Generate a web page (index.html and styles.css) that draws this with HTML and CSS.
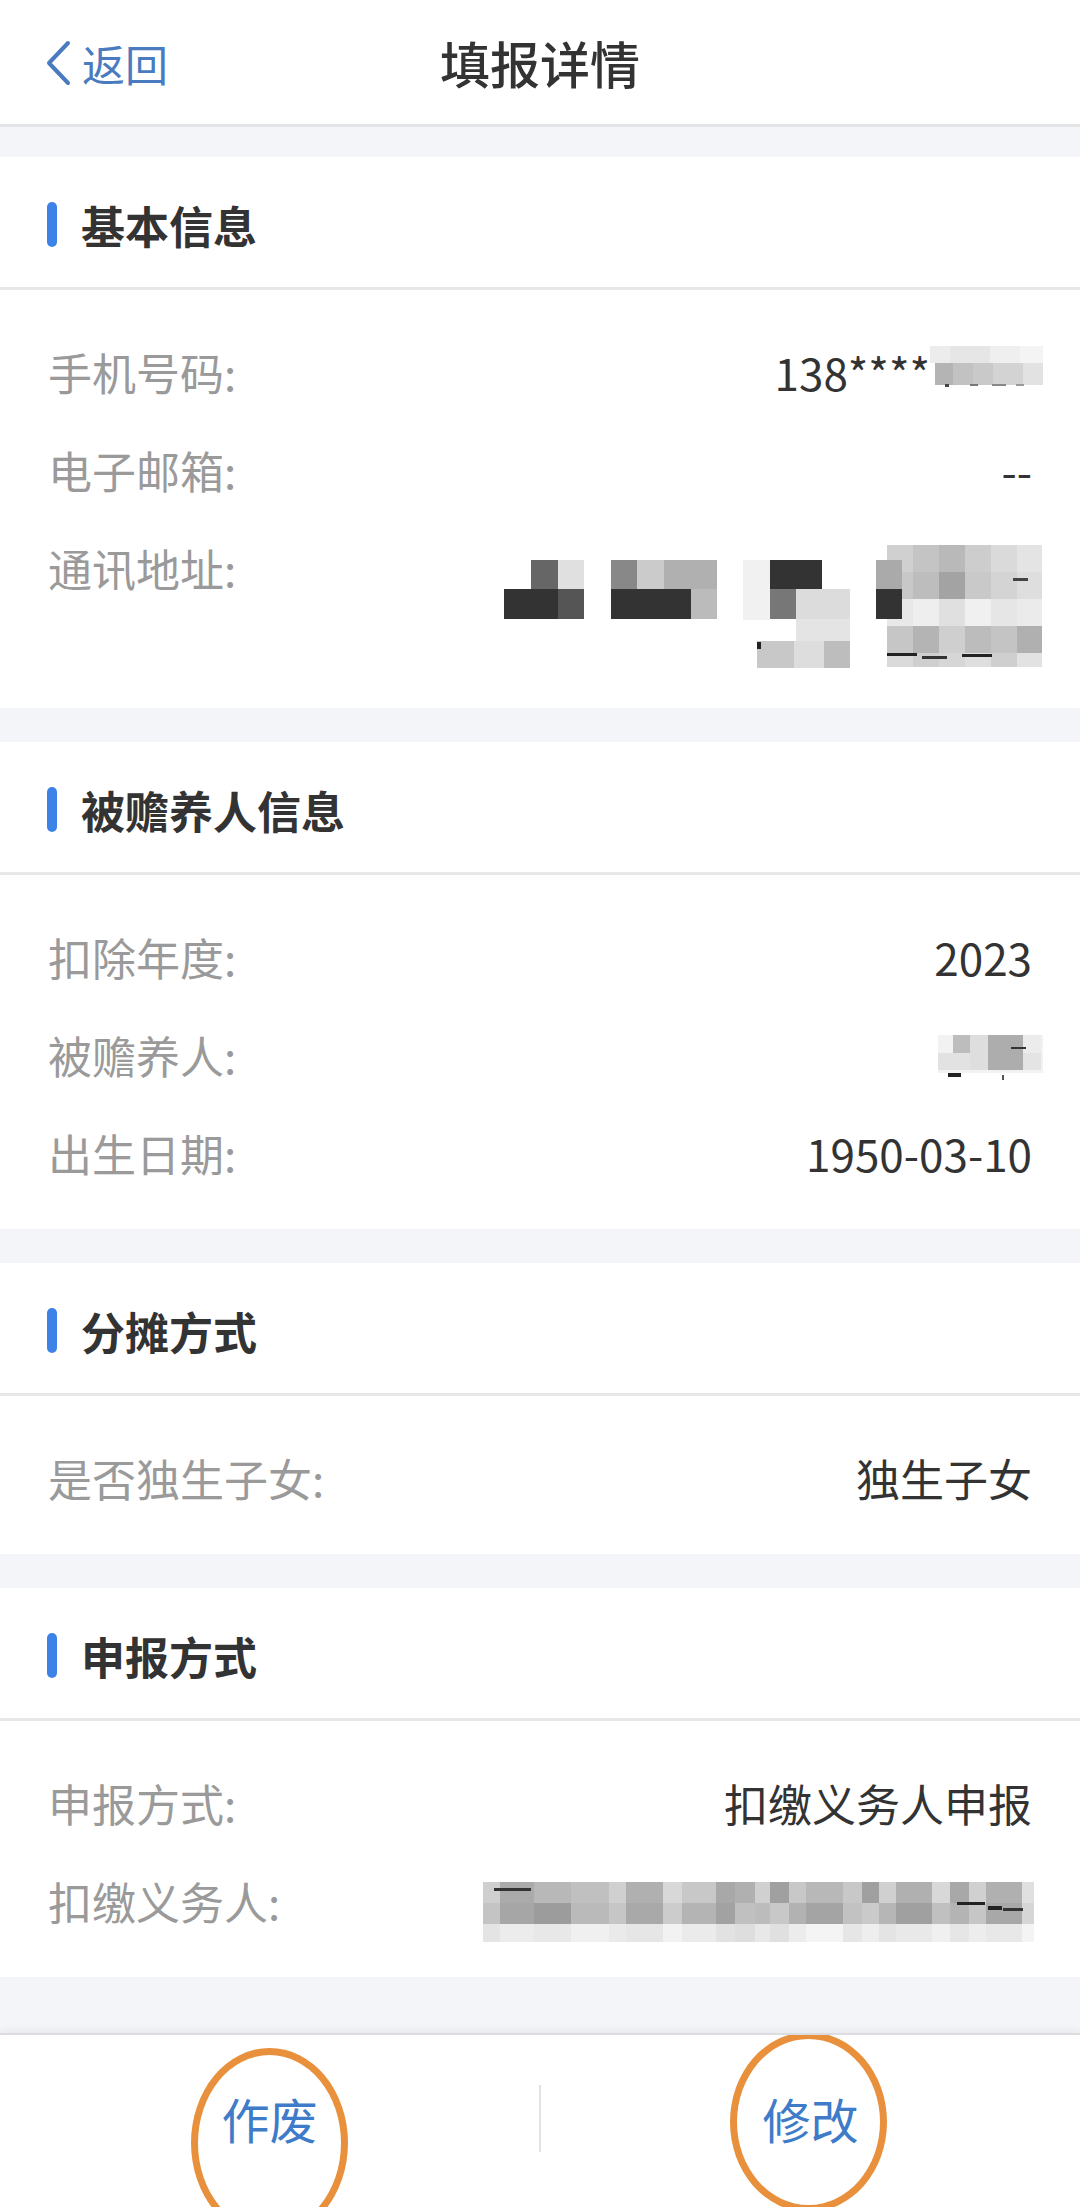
FILE: index.html
```html
<!DOCTYPE html>
<html lang="zh-CN">
<head>
<meta charset="utf-8">
<title>填报详情</title>
<link rel="stylesheet" href="styles.css">
</head>
<body>
<div class="page">
  <header class="nav">
    <a class="back" href="#">
      <svg class="back-icon" width="26" height="46" viewBox="0 0 26 46"><polyline points="23,3 4,23 23,43" fill="none" stroke="#4a7bbf" stroke-width="4" stroke-linecap="round" stroke-linejoin="round"/></svg>
      <span>返回</span>
    </a>
    <h1 class="nav-title">填报详情</h1>
    <span></span>
  </header>

  <main class="content">
    <section class="card">
      <div class="card-head"><span class="bar"></span><h2>基本信息</h2></div>
      <div class="card-body">
        <div class="row">
          <span class="label">手机号码:</span>
          <span class="value">138****<svg class="mosaic mosaic-phone" width="113" height="42" viewBox="0 0 113 42">
            <rect x="0" y="0" width="20" height="17" fill="#ececec"/>
            <rect x="20" y="0" width="40" height="17" fill="#e6e6e6"/>
            <rect x="60" y="0" width="30" height="17" fill="#efefef"/>
            <rect x="90" y="0" width="23" height="17" fill="#f4f4f4"/>
            <rect x="5" y="17" width="18" height="22" fill="#b4b4b4"/>
            <rect x="23" y="17" width="20" height="22" fill="#c2c2c2"/>
            <rect x="43" y="17" width="20" height="22" fill="#c9c9c9"/>
            <rect x="63" y="17" width="30" height="22" fill="#d3d3d3"/>
            <rect x="93" y="17" width="20" height="22" fill="#e2e2e2"/>
            <rect x="15" y="38" width="4" height="3" fill="#444"/>
            <rect x="40" y="38" width="8" height="2" fill="#777"/>
            <rect x="62" y="38" width="14" height="2" fill="#888"/>
            <rect x="86" y="38" width="8" height="2" fill="#999"/>
          </svg></span>
        </div>
        <div class="row">
          <span class="label">电子邮箱:</span>
          <span class="value">--</span>
        </div>
        <div class="row">
          <span class="label">通讯地址:</span>
          <span class="value"><svg class="mosaic mosaic-address" width="560" height="130" viewBox="0 0 560 130">
            <rect x="405" y="5" width="26" height="27" fill="#d0d0d0"/>
            <rect x="431" y="5" width="26" height="27" fill="#c4c4c4"/>
            <rect x="457" y="5" width="26" height="27" fill="#b9b9b9"/>
            <rect x="483" y="5" width="26" height="27" fill="#cdcdcd"/>
            <rect x="509" y="5" width="26" height="27" fill="#dadada"/>
            <rect x="535" y="5" width="25" height="27" fill="#e4e4e4"/>
            <rect x="405" y="32" width="26" height="27" fill="#c8c8c8"/>
            <rect x="431" y="32" width="26" height="27" fill="#bdbdbd"/>
            <rect x="457" y="32" width="26" height="27" fill="#a3a3a3"/>
            <rect x="483" y="32" width="26" height="27" fill="#c9c9c9"/>
            <rect x="509" y="32" width="26" height="27" fill="#d4d4d4"/>
            <rect x="535" y="32" width="25" height="27" fill="#dedede"/>
            <rect x="405" y="59" width="26" height="27" fill="#e8e8e8"/>
            <rect x="431" y="59" width="26" height="27" fill="#eeeeee"/>
            <rect x="457" y="59" width="26" height="27" fill="#e0e0e0"/>
            <rect x="483" y="59" width="26" height="27" fill="#f0f0f0"/>
            <rect x="509" y="59" width="26" height="27" fill="#e6e6e6"/>
            <rect x="535" y="59" width="25" height="27" fill="#ebebeb"/>
            <rect x="405" y="86" width="26" height="27" fill="#c6c6c6"/>
            <rect x="431" y="86" width="26" height="27" fill="#b4b4b4"/>
            <rect x="457" y="86" width="26" height="27" fill="#cfcfcf"/>
            <rect x="483" y="86" width="26" height="27" fill="#bcbcbc"/>
            <rect x="509" y="86" width="26" height="27" fill="#c4c4c4"/>
            <rect x="535" y="86" width="25" height="27" fill="#b0b0b0"/>
            <rect x="405" y="113" width="26" height="14" fill="#dadada"/>
            <rect x="431" y="113" width="26" height="14" fill="#cfcfcf"/>
            <rect x="457" y="113" width="26" height="14" fill="#d6d6d6"/>
            <rect x="483" y="113" width="26" height="14" fill="#dedede"/>
            <rect x="509" y="113" width="26" height="14" fill="#cfcfcf"/>
            <rect x="535" y="113" width="25" height="14" fill="#e2e2e2"/>
            <rect x="261" y="20" width="27" height="60" fill="#f1f1f1"/>
            <rect x="314" y="79" width="54" height="22" fill="#e4e4e4"/>
            <rect x="275" y="101" width="37" height="27" fill="#c8c8c8"/>
            <rect x="312" y="101" width="30" height="27" fill="#dddddd"/>
            <rect x="342" y="101" width="26" height="27" fill="#bdbdbd"/>
            <rect x="49" y="20" width="27" height="29" fill="#666666"/>
            <rect x="76" y="20" width="26" height="29" fill="#e0e0e0"/>
            <rect x="129" y="20" width="26" height="29" fill="#888888"/>
            <rect x="155" y="20" width="27" height="29" fill="#cbcbcb"/>
            <rect x="182" y="20" width="53" height="29" fill="#b0b0b0"/>
            <rect x="288" y="20" width="52" height="29" fill="#333333"/>
            <rect x="394" y="20" width="26" height="29" fill="#aaaaaa"/>
            <rect x="22" y="49" width="54" height="30" fill="#333333"/>
            <rect x="76" y="49" width="26" height="30" fill="#555555"/>
            <rect x="129" y="49" width="80" height="30" fill="#333333"/>
            <rect x="209" y="49" width="26" height="30" fill="#bbbbbb"/>
            <rect x="288" y="49" width="26" height="30" fill="#777777"/>
            <rect x="314" y="49" width="54" height="30" fill="#dcdcdc"/>
            <rect x="394" y="49" width="26" height="30" fill="#333333"/>
            <rect x="275" y="102" width="4" height="7" fill="#222"/>
            <rect x="405" y="113" width="30" height="3" fill="#222"/>
            <rect x="440" y="116" width="25" height="3" fill="#333"/>
            <rect x="480" y="114" width="30" height="3" fill="#222"/>
            <rect x="531" y="38" width="15" height="3" fill="#444"/>
          </svg></span>
        </div>
      </div>
    </section>

    <section class="card">
      <div class="card-head"><span class="bar"></span><h2>被赡养人信息</h2></div>
      <div class="card-body">
        <div class="row">
          <span class="label">扣除年度:</span>
          <span class="value">2023</span>
        </div>
        <div class="row">
          <span class="label">被赡养人:</span>
          <span class="value"><svg class="mosaic mosaic-name" width="105" height="48" viewBox="0 0 105 48">
            <rect x="0" y="2" width="105" height="38" fill="#f2f2f2"/>
            <rect x="0" y="20" width="50" height="17" fill="#e2e2e2"/>
            <rect x="15" y="2" width="17" height="18" fill="#bdbdbd"/>
            <rect x="32" y="2" width="18" height="35" fill="#dedede"/>
            <rect x="50" y="2" width="35" height="35" fill="#adadad"/>
            <rect x="85" y="2" width="18" height="18" fill="#ececec"/>
            <rect x="85" y="20" width="18" height="17" fill="#e4e4e4"/>
            <rect x="10" y="40" width="13" height="4" fill="#222"/>
            <rect x="73" y="14" width="15" height="2" fill="#333"/>
            <rect x="64" y="42" width="2" height="5" fill="#555"/>
          </svg></span>
        </div>
        <div class="row">
          <span class="label">出生日期:</span>
          <span class="value">1950-03-10</span>
        </div>
      </div>
    </section>

    <section class="card">
      <div class="card-head"><span class="bar"></span><h2>分摊方式</h2></div>
      <div class="card-body">
        <div class="row">
          <span class="label">是否独生子女:</span>
          <span class="value">独生子女</span>
        </div>
      </div>
    </section>

    <section class="card">
      <div class="card-head"><span class="bar"></span><h2>申报方式</h2></div>
      <div class="card-body">
        <div class="row">
          <span class="label">申报方式:</span>
          <span class="value">扣缴义务人申报</span>
        </div>
        <div class="row">
          <span class="label">扣缴义务人:</span>
          <span class="value"><svg class="mosaic mosaic-payer" width="555" height="62" viewBox="0 0 555 62">
            <g>
              <rect x="0" y="0" width="17" height="21" fill="#cfcfcf"/>
              <rect x="17" y="0" width="34" height="21" fill="#aaaaaa"/>
              <rect x="51" y="0" width="37" height="21" fill="#b8b8b8"/>
              <rect x="88" y="0" width="38" height="21" fill="#c0c0c0"/>
              <rect x="126" y="0" width="17" height="21" fill="#d0d0d0"/>
              <rect x="143" y="0" width="37" height="21" fill="#b0b0b0"/>
              <rect x="180" y="0" width="19" height="21" fill="#d8d8d8"/>
              <rect x="199" y="0" width="34" height="21" fill="#c8c8c8"/>
              <rect x="233" y="0" width="19" height="21" fill="#a8a8a8"/>
              <rect x="252" y="0" width="20" height="21" fill="#b0b0b0"/>
              <rect x="272" y="0" width="15" height="21" fill="#d0d0d0"/>
              <rect x="287" y="0" width="19" height="21" fill="#a0a0a0"/>
              <rect x="306" y="0" width="17" height="21" fill="#c8c8c8"/>
              <rect x="323" y="0" width="37" height="21" fill="#b8b8b8"/>
              <rect x="360" y="0" width="19" height="21" fill="#c8c8c8"/>
              <rect x="379" y="0" width="17" height="21" fill="#a0a0a0"/>
              <rect x="396" y="0" width="17" height="21" fill="#d0d0d0"/>
              <rect x="413" y="0" width="36" height="21" fill="#b0b0b0"/>
              <rect x="449" y="0" width="18" height="21" fill="#d8d8d8"/>
              <rect x="467" y="0" width="19" height="21" fill="#a8a8a8"/>
              <rect x="486" y="0" width="17" height="21" fill="#d0d0d0"/>
              <rect x="503" y="0" width="36" height="21" fill="#b0b0b0"/>
              <rect x="539" y="0" width="12" height="21" fill="#e0e0e0"/>
            </g>
            <g>
              <rect x="0" y="21" width="17" height="21" fill="#c4c4c4"/>
              <rect x="17" y="21" width="34" height="21" fill="#a6a6a6"/>
              <rect x="51" y="21" width="37" height="21" fill="#9c9c9c"/>
              <rect x="88" y="21" width="38" height="21" fill="#bababa"/>
              <rect x="126" y="21" width="17" height="21" fill="#c6c6c6"/>
              <rect x="143" y="21" width="37" height="21" fill="#a9a9a9"/>
              <rect x="180" y="21" width="19" height="21" fill="#cccccc"/>
              <rect x="199" y="21" width="34" height="21" fill="#b4b4b4"/>
              <rect x="233" y="21" width="19" height="21" fill="#a2a2a2"/>
              <rect x="252" y="21" width="20" height="21" fill="#c0c0c0"/>
              <rect x="272" y="21" width="15" height="21" fill="#bcbcbc"/>
              <rect x="287" y="21" width="19" height="21" fill="#c8c8c8"/>
              <rect x="306" y="21" width="17" height="21" fill="#b2b2b2"/>
              <rect x="323" y="21" width="37" height="21" fill="#a4a4a4"/>
              <rect x="360" y="21" width="19" height="21" fill="#c2c2c2"/>
              <rect x="379" y="21" width="17" height="21" fill="#cacaca"/>
              <rect x="396" y="21" width="17" height="21" fill="#b6b6b6"/>
              <rect x="413" y="21" width="36" height="21" fill="#a0a0a0"/>
              <rect x="449" y="21" width="18" height="21" fill="#c0c0c0"/>
              <rect x="467" y="21" width="19" height="21" fill="#b4b4b4"/>
              <rect x="486" y="21" width="17" height="21" fill="#c6c6c6"/>
              <rect x="503" y="21" width="36" height="21" fill="#a8a8a8"/>
              <rect x="539" y="21" width="12" height="21" fill="#d6d6d6"/>
            </g>
            <g>
              <rect x="0" y="42" width="17" height="18" fill="#e4e4e4"/>
              <rect x="17" y="42" width="34" height="18" fill="#ececec"/>
              <rect x="51" y="42" width="37" height="18" fill="#e8e8e8"/>
              <rect x="88" y="42" width="38" height="18" fill="#f0f0f0"/>
              <rect x="126" y="42" width="17" height="18" fill="#eaeaea"/>
              <rect x="143" y="42" width="37" height="18" fill="#e6e6e6"/>
              <rect x="180" y="42" width="19" height="18" fill="#f2f2f2"/>
              <rect x="199" y="42" width="34" height="18" fill="#ebebeb"/>
              <rect x="233" y="42" width="19" height="18" fill="#e2e2e2"/>
              <rect x="252" y="42" width="20" height="18" fill="#dedede"/>
              <rect x="272" y="42" width="15" height="18" fill="#e8e8e8"/>
              <rect x="287" y="42" width="19" height="18" fill="#e0e0e0"/>
              <rect x="306" y="42" width="17" height="18" fill="#ececec"/>
              <rect x="323" y="42" width="37" height="18" fill="#f4f4f4"/>
              <rect x="360" y="42" width="19" height="18" fill="#e6e6e6"/>
              <rect x="379" y="42" width="17" height="18" fill="#eeeeee"/>
              <rect x="396" y="42" width="17" height="18" fill="#e4e4e4"/>
              <rect x="413" y="42" width="36" height="18" fill="#e9e9e9"/>
              <rect x="449" y="42" width="18" height="18" fill="#f0f0f0"/>
              <rect x="467" y="42" width="19" height="18" fill="#e6e6e6"/>
              <rect x="486" y="42" width="17" height="18" fill="#ededed"/>
              <rect x="503" y="42" width="36" height="18" fill="#e8e8e8"/>
              <rect x="539" y="42" width="12" height="18" fill="#f4f4f4"/>
            </g>
            <rect x="11" y="6" width="37" height="3" fill="#333"/>
            <rect x="474" y="20" width="28" height="3" fill="#222"/>
            <rect x="505" y="24" width="14" height="4" fill="#222"/>
            <rect x="520" y="26" width="20" height="3" fill="#333"/>
          </svg></span>
        </div>
      </div>
    </section>
  </main>

  <footer class="actions">
    <button class="action" type="button">作废</button>
    <span class="sep"></span>
    <button class="action" type="button">修改</button>
    <span class="ring ring-1"></span>
    <span class="ring ring-2"></span>
  </footer>
</div>
</body>
</html>
```

FILE: styles.css
```css
html, body {
  margin: 0;
  padding: 0;
}

body {
  background: #f4f5f8;
  font-family: "Noto Sans CJK SC", "Noto Sans", sans-serif;
  color: #333;
}

.page {
  min-height: 2207px;
  display: flex;
  flex-direction: column;
}

/* Navigation bar */
.nav {
  height: 124px;
  background: #fff;
  border-bottom: 3px solid #e3e4e6;
  display: grid;
  grid-template-columns: 1fr auto 1fr;
  align-items: center;
}

.back {
  display: flex;
  align-items: center;
  gap: 11px;
  padding-left: 45px;
  padding-top: 2px;
  color: #4a7bbf;
  font-size: 43px;
  line-height: 1;
  text-decoration: none;
}

.back-icon {
  display: block;
}

.nav-title {
  margin: 0;
  font-size: 50px;
  font-weight: 500;
  color: #333;
  line-height: 1;
}

/* Content */
.content {
  flex: 1;
  display: flex;
  flex-direction: column;
  gap: 34px;
  padding-top: 30px;
}

.card {
  background: #fff;
}

.card-head {
  box-sizing: border-box;
  height: 133px;
  padding-top: 5px;
  padding-left: 47px;
  border-bottom: 3px solid #e6e7e9;
  display: flex;
  align-items: center;
  gap: 24px;
}

.bar {
  width: 10px;
  height: 45px;
  border-radius: 5px;
  background: #3d82e6;
}

.card-head h2 {
  margin: 0;
  font-size: 44px;
  font-weight: 700;
  color: #333;
  line-height: 1;
}

.card-body {
  padding: 33px 48px 27px 48px;
}

.row {
  display: flex;
  justify-content: space-between;
  align-items: flex-start;
  padding: 21px 0;
  font-size: 44px;
  line-height: 56px;
}

.label {
  color: #9a9a9a;
  flex-shrink: 0;
}

.value {
  color: #333;
  display: flex;
  align-items: flex-start;
}

.mosaic {
  display: block;
  flex-shrink: 0;
}

.mosaic-phone {
  margin-top: 2px;
  margin-right: -11px;
  margin-bottom: -2px;
}

.mosaic-address {
  margin-top: 0;
  margin-right: -10px;
  margin-bottom: -10px;
}

.mosaic-name {
  margin-top: 6px;
  margin-right: -11px;
}

.mosaic-payer {
  margin-top: 9px;
  margin-right: -6px;
  margin-bottom: -15px;
}

/* Bottom action bar */
.actions {
  position: relative;
  overflow: hidden;
  height: 174px;
  box-sizing: border-box;
  border-top: 2px solid #dcdde0;
  box-shadow: 0 -3px 8px rgba(0, 0, 0, 0.05);
  background: #fff;
  display: grid;
  grid-template-columns: 1fr 2px 1fr;
  align-items: center;
  padding-bottom: 6px;
}

.action {
  background: none;
  border: 0;
  padding: 0;
  font-family: "Noto Sans CJK SC", "Noto Sans", sans-serif;
  font-size: 48px;
  line-height: 1;
  color: #3e7bc8;
  text-align: center;
}

.sep {
  width: 2px;
  height: 67px;
  background: #e2e2e4;
}

.ring {
  position: absolute;
  box-sizing: border-box;
  border: 7px solid #e8903c;
  border-radius: 50%;
}

.ring-1 {
  left: 191px;
  top: 13px;
  width: 157px;
  height: 190px;
}

.ring-2 {
  left: 730px;
  top: -3px;
  width: 157px;
  height: 180px;
}
```
